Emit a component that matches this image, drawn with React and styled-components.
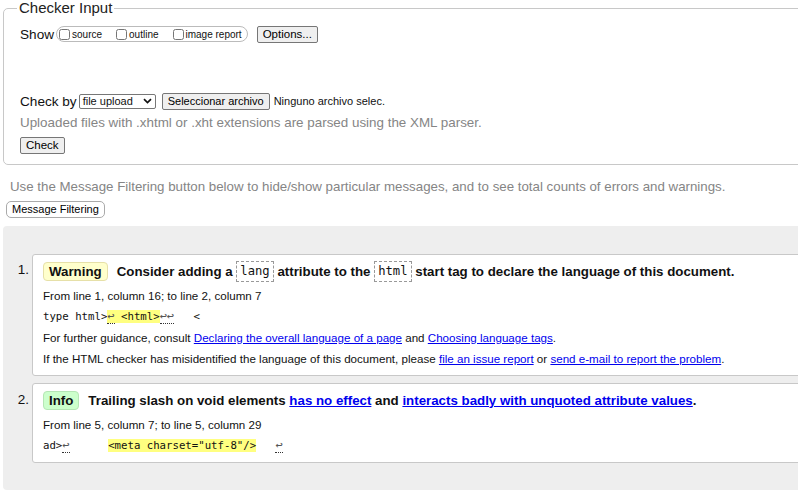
import React from "react"
import styled, { createGlobalStyle } from "styled-components"

const Global = createGlobalStyle`
    html, body {
        margin: 0;
        padding: 0;
        background: #fff;
        overflow: hidden;
    }
    body {
        font-family: "Liberation Sans", Arial, sans-serif;
        color: #111;
    }
`

const Page = styled.div`
    width: 840px;
    padding: 1px 0 0 3px;
`

const Fieldset = styled.fieldset`
    margin: 0;
    padding: 10px 16px 10px 16px;
    border: 1px solid #c8c8c8;
    border-radius: 5px;
    min-width: 0;
`

const Legend = styled.legend`
    font-size: 15px;
    color: #222;
    padding: 0 2px;
    margin-left: -3px;
    line-height: 14px;
`

const Row = styled.div`
    display: flex;
    align-items: center;
    height: ${p => p.h || 20}px;
    margin-top: ${p => p.mt || 0}px;
    font-size: 13.6px;
`

const Label = styled.span`
    margin-right: 2px;
`

const CheckGroup = styled.span`
    display: inline-flex;
    align-items: center;
    border: 1px solid #bbb;
    border-radius: 8px;
    height: 14px;
    padding: 0 5px 0 2px;
    margin-right: 9px;
`

const CheckItem = styled.label`
    display: inline-flex;
    align-items: center;
    font-size: 10px;
    margin-right: ${p => (p.last ? 0 : 14)}px;
    input {
        margin: 0 2px 0 0;
        width: 11px;
        height: 11px;
    }
`

const Button = styled.button`
    font-family: "Liberation Sans", Arial, sans-serif;
    font-size: ${p => p.fs || 11.5}px;
    color: #000;
    background: #efefef;
    border: 1px solid #767676;
    border-radius: 2px;
    padding: 0 5px;
    height: 17px;
    line-height: 14px;
`

const PillButton = styled(Button)`
    font-size: 11px;
    background: #fff;
    border: 1px solid #aaa;
    border-radius: 5px;
    padding: 0 5px;
    height: 17px;
    margin-left: 3px;
`

const Select = styled.span`
    display: inline-flex;
    align-items: center;
    justify-content: space-between;
    box-sizing: border-box;
    width: 77px;
    height: 15px;
    border: 1px solid #767676;
    border-radius: 2px;
    font-size: 11px;
    padding: 0 3px 0 3px;
    margin: 0 6px 0 0;
    svg {
        width: 9px;
        height: 6px;
    }
`

const FileName = styled.span`
    font-size: 11px;
    margin-left: 4px;
`

const Hint = styled.p`
    margin: 0;
    color: #858585;
    font-size: 13.4px;
    line-height: 20px;
`

const Note = styled.p`
    margin: 13px 0 3px 7px;
    color: #858585;
    font-size: 13.3px;
    line-height: 18px;
`

const Results = styled.div`
    margin-top: 8px;
    background: #eeeeee;
    border-radius: 4px;
    padding: 28px 0 27px 0;
    height: 209px;
    box-sizing: content-box;
`

const Item = styled.div`
    display: flex;
    margin-bottom: 7px;
`

const Num = styled.div`
    width: 27px;
    text-align: right;
    padding-right: 3px;
    font-size: 13.5px;
    padding-top: ${p => p.pt}px;
`

const Box = styled.div`
    width: 820px;
    background: #fff;
    border: 1px solid #c8c8c8;
    border-radius: 3px;
    padding: 6px 10px 6px 10px;
`

const Title = styled.div`
    display: flex;
    align-items: center;
    height: 21px;
    font-size: 13.3px;
    font-weight: bold;
    white-space: pre;
    margin-bottom: 3px;
`

const Badge = styled.span`
    display: inline-block;
    background: ${p => (p.kind === "info" ? "#cfc" : "#ffc")};
    border: 1px solid ${p => (p.kind === "info" ? "#b5e6b5" : "#e6e0a8")};
    border-radius: 4px;
    padding: 0 5px;
    line-height: 17px;
    margin-right: 9px;
`

const Code = styled.code`
    font-family: "DejaVu Sans Mono", "Liberation Mono", monospace;
    font-weight: normal;
    font-size: 12.2px;
    border: 1px dashed #999;
    padding: 2px 3px;
    line-height: 15px;
`

const Link = styled.a`
    color: #0000ee;
    text-decoration: underline;
`

const Line = styled.div`
    font-size: 11.6px;
    line-height: 21px;
    white-space: pre;
`

const Extract = styled.div`
    font-family: "DejaVu Sans Mono", "Liberation Mono", monospace;
    font-size: 10.7px;
    line-height: 21px;
    white-space: pre;
    color: #111;
`

const Mark = styled.mark`
    background: #ffff80;
    color: inherit;
`

const Lf = styled.span`
    color: #555;
    font-size: 12px;
    border-bottom: 1px dotted #333;
`

const Chevron = () => (
    <svg viewBox="0 0 9 6">
        <path d="M1 1.2 L4.5 4.5 L8 1.2" fill="none" stroke="#111" strokeWidth="1.7" />
    </svg>
)

const App = () => (
    <>
        <Global />
        <Page>
            <Fieldset>
                <Legend>Checker Input</Legend>
                <Row h={18}>
                    <Label>Show</Label>
                    <CheckGroup>
                        <CheckItem><input type="checkbox" />source</CheckItem>
                        <CheckItem><input type="checkbox" />outline</CheckItem>
                        <CheckItem last><input type="checkbox" />image report</CheckItem>
                    </CheckGroup>
                    <Button>Options...</Button>
                </Row>
                <Row h={18} mt={49}>
                    <Label>Check by</Label>
                    <Select>file upload <Chevron /></Select>
                    <Button fs={11}>Seleccionar archivo</Button>
                    <FileName>Ninguno archivo selec.</FileName>
                </Row>
                <Row h={24} mt={1}>
                    <Hint>Uploaded files with .xhtml or .xht extensions are parsed using the XML parser.</Hint>
                </Row>
                <Row h={18} mt={1}>
                    <Button>Check</Button>
                </Row>
            </Fieldset>
            <Note>Use the Message Filtering button below to hide/show particular messages, and to see total counts of errors and warnings.</Note>
            <PillButton>Message Filtering</PillButton>
            <Results>
                <Item>
                    <Num pt={8}>1.</Num>
                    <Box>
                        <Title>
                            <Badge>Warning</Badge>
                            Consider adding a <Code>lang</Code> attribute to the <Code>html</Code> start tag to declare the language of this document.
                        </Title>
                        <Line>From line 1, column 16; to line 2, column 7</Line>
                        <Extract>type html&gt;<Mark><Lf>↩</Lf> &lt;html&gt;</Mark><Lf>↩↩</Lf>   &lt;</Extract>
                        <Line>For further guidance, consult <Link href="#">Declaring the overall language of a page</Link> and <Link href="#">Choosing language tags</Link>.</Line>
                        <Line>If the HTML checker has misidentified the language of this document, please <Link href="#">file an issue report</Link> or <Link href="#">send e-mail to report the problem</Link>.</Line>
                    </Box>
                </Item>
                <Item>
                    <Num pt={9}>2.</Num>
                    <Box>
                        <Title>
                            <Badge kind="info">Info</Badge>
                            Trailing slash on void elements <Link href="#">has no effect</Link> and <Link href="#">interacts badly with unquoted attribute values</Link>.
                        </Title>
                        <Line>From line 5, column 7; to line 5, column 29</Line>
                        <Extract>ad&gt;<Lf>↩</Lf>      <Mark>&lt;meta charset="utf-8"/&gt;</Mark>   <Lf>↩</Lf></Extract>
                    </Box>
                </Item>
            </Results>
        </Page>
    </>
)

export default App
